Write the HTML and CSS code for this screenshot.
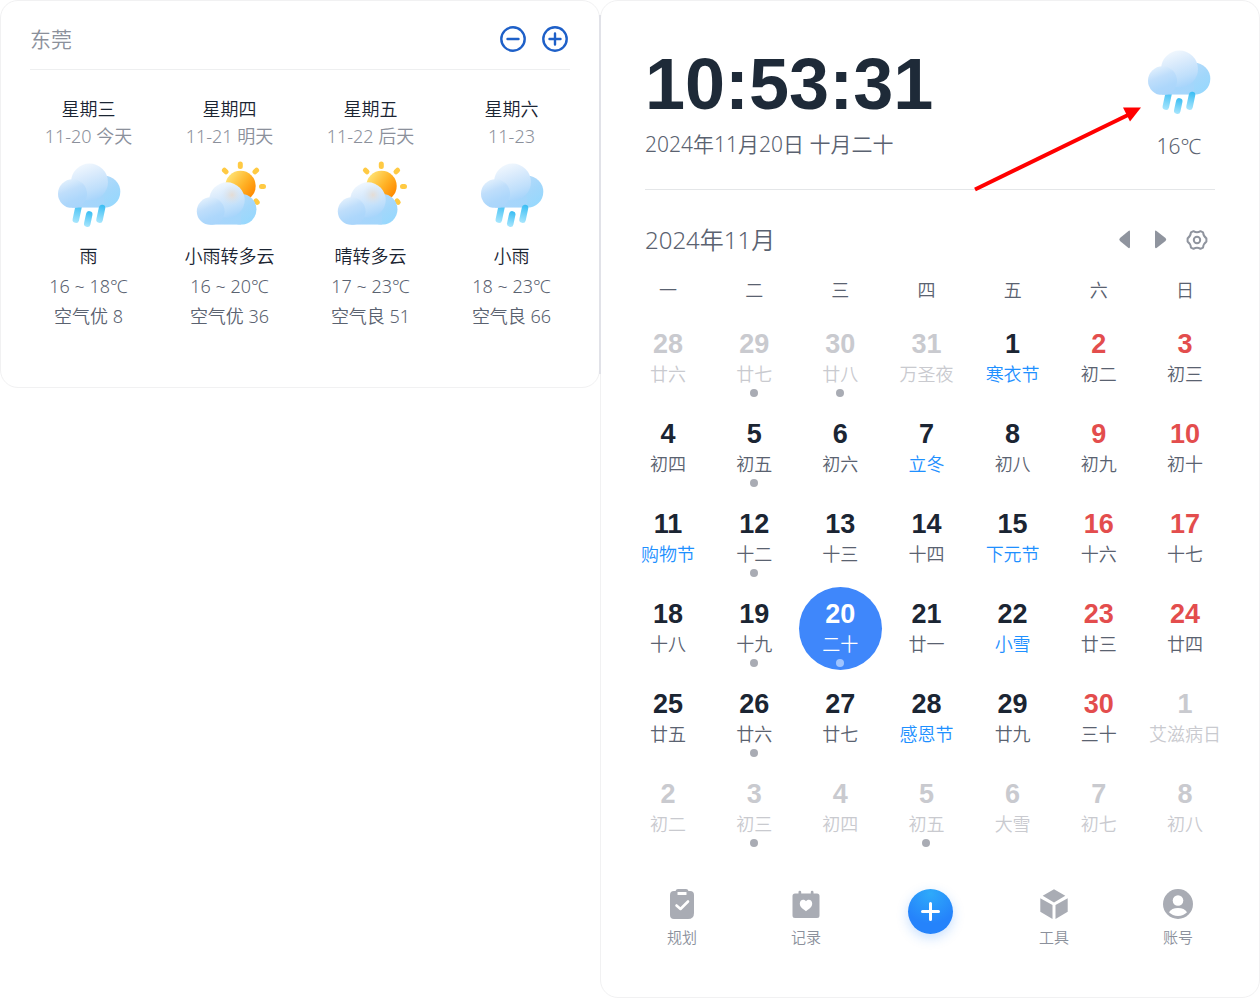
FILE: index.html
```html
<!DOCTYPE html>
<html lang="zh-CN">

<head>
	<meta charset="UTF-8">
	<meta name="viewport" content="width=device-width, initial-scale=1">
	<title>日历天气</title>
	<link rel="stylesheet" href="styles.css">
</head>

<body>
	<!-- 公用图标 -->
	<svg class="defs" width="0" height="0" aria-hidden="true">
		<defs>
			<linearGradient id="sky" x1=".3" y1="0" x2=".9" y2=".8">
				<stop offset="0" stop-color="#b9dcfa" />
				<stop offset=".6" stop-color="#a2d7fb" />
				<stop offset="1" stop-color="#98d8fd" />
			</linearGradient>
			<linearGradient id="base" x1="0" y1="0" x2="1" y2="0">
				<stop offset="0" stop-color="#a9d5fb" />
				<stop offset="1" stop-color="#a3d6fb" />
			</linearGradient>
			<linearGradient id="puff" x1=".2" y1="0" x2=".55" y2="1">
				<stop offset="0" stop-color="#f4f9fe" />
				<stop offset=".4" stop-color="#d8eafc" />
				<stop offset=".75" stop-color="#bfdffb" />
				<stop offset="1" stop-color="#a8d5fb" />
			</linearGradient>
			<linearGradient id="side" x1=".2" y1="0" x2=".6" y2="1">
				<stop offset="0" stop-color="#e6f2fd" />
				<stop offset=".4" stop-color="#bfdefb" />
				<stop offset=".75" stop-color="#add7fb" />
				<stop offset="1" stop-color="#a9d5fb" />
			</linearGradient>
			<linearGradient id="drop" x1="0" y1="0" x2="0" y2="1">
				<stop offset="0" stop-color="#38bdf3" />
				<stop offset="1" stop-color="#a9e6fd" />
			</linearGradient>
			<linearGradient id="sun" x1=".1" y1=".2" x2=".9" y2=".8">
				<stop offset="0" stop-color="#ffe070" />
				<stop offset=".5" stop-color="#ffb72c" />
				<stop offset="1" stop-color="#ff8a00" />
			</linearGradient>
			<radialGradient id="glow">
				<stop offset="0" stop-color="#ead9c9" stop-opacity=".8" />
				<stop offset="1" stop-color="#d5e4f3" stop-opacity="0" />
			</radialGradient>
			<filter id="soft" x="-10%" y="-10%" width="120%" height="120%">
				<feGaussianBlur stdDeviation=".7" />
			</filter>
			<clipPath id="cut">
				<path d="M0 0h72v48.700H0z" />
			</clipPath>
		</defs>
		<symbol id="cloud" viewBox="0 0 72 72">
			<g clip-path="url(#cut)">
				<circle cx="51.300" cy="32.700" r="16" fill="url(#sky)" />
				<path d="M19 36h32v12.700H19z" fill="url(#base)" />
				<circle cx="36.500" cy="23" r="18.500" fill="url(#puff)" filter="url(#soft)" />
				<circle cx="19.500" cy="34.700" r="14.500" fill="url(#side)" filter="url(#soft)" />
			</g>
		</symbol>
		<symbol id="rain" viewBox="0 0 72 72">
			<g fill="url(#drop)">
				<rect x="21" y="44" width="6.500" height="20" rx="3.200" transform="rotate(12 24 54)" />
				<rect x="32" y="52" width="6.500" height="16" rx="3.200" transform="rotate(12 35 60)" />
			</g>
			<use href="#cloud" width="72" height="72" />
			<rect x="44.500" y="45.500" width="6.500" height="18.500" rx="3.200" fill="url(#drop)" transform="rotate(12 47.500 55)" />
		</symbol>
		<symbol id="cloudy" viewBox="0 0 72 72">
			<g stroke="#ffca43" stroke-width="5" stroke-linecap="round">
				<path d="M46.300 5v2.500M30.400 11.200l1.600 1.600M62.600 11.200L61 12.800M67.500 27.600h2M62 42l1.200 1.400" />
			</g>
			<circle cx="46.500" cy="27" r="15.200" fill="url(#sun)" />
			<use href="#cloud" x="-2" y="19" width="69" height="69" />
			<circle cx="38" cy="36" r="11" fill="url(#glow)" />
		</symbol>
	</svg>

	<div class="layout">
		<section class="panel weather">
			<header class="city">
				<h2>东莞</h2>
				<div class="city-btns">
					<button type="button" aria-label="删除城市">
						<svg width="26" height="26" viewBox="0 0 26 26"><circle cx="13" cy="13" r="11.700" /><path d="M7.500 13h11" /></svg>
					</button>
					<button type="button" aria-label="添加城市">
						<svg width="26" height="26" viewBox="0 0 26 26"><circle cx="13" cy="13" r="11.700" /><path d="M7.500 13h11M13 7.500v11" /></svg>
					</button>
				</div>
			</header>
			<ul class="forecast">
				<li>
					<strong>星期三</strong>
					<time>11-20 今天</time>
					<svg class="sky"><use href="#rain" /></svg>
					<b>雨</b>
					<span>16 ~ 18℃</span>
					<span>空气优 8</span>
				</li>
				<li>
					<strong>星期四</strong>
					<time>11-21 明天</time>
					<svg class="sky"><use href="#cloudy" /></svg>
					<b>小雨转多云</b>
					<span>16 ~ 20℃</span>
					<span>空气优 36</span>
				</li>
				<li>
					<strong>星期五</strong>
					<time>11-22 后天</time>
					<svg class="sky"><use href="#cloudy" /></svg>
					<b>晴转多云</b>
					<span>17 ~ 23℃</span>
					<span>空气良 51</span>
				</li>
				<li>
					<strong>星期六</strong>
					<time>11-23</time>
					<svg class="sky"><use href="#rain" /></svg>
					<b>小雨</b>
					<span>18 ~ 23℃</span>
					<span>空气良 66</span>
				</li>
			</ul>
		</section>

		<section class="panel calendar">
			<header class="now">
				<div>
					<div class="clock">10:53:31</div>
					<div class="today">2024年11月20日 十月二十</div>
				</div>
				<div class="now-weather">
					<svg class="sky"><use href="#rain" /></svg>
					<span>16℃</span>
				</div>
			</header>
			<svg class="arrow" width="170" height="86" viewBox="0 0 170 86">
				<path d="M2 83.500L155 9" stroke="#f00" stroke-width="4" />
				<path d="M168 1.500h-18l7 14z" fill="#f00" />
			</svg>

			<div class="month">
				<h1>2024年11月</h1>
				<div class="month-btns">
					<button type="button" aria-label="上个月">
						<svg width="24" height="24" viewBox="0 0 24 24"><path d="M17 3.500v15.500q0 1.500-1.500 1L7 13q-1.500-1.500 0-3L15.500 3q1.500-1 1.500.500z" /></svg>
					</button>
					<button type="button" aria-label="下个月">
						<svg width="24" height="24" viewBox="0 0 24 24"><path d="M6 3.500v15.500q0 1.500 1.500 1L16.500 13q1.500-1.500 0-3L7.500 3q-1.500-1-1.500.500z" /></svg>
					</button>
					<button type="button" class="setting" aria-label="设置">
						<svg width="24" height="24" viewBox="0 0 24 24">
							<path d="M8.500 3.200Q12 5.400 15.500 3.200L18 4.400Q18.600 8.600 21.400 10.400V13.600Q18.600 15.400 18 19.600L15.500 20.800Q12 18.600 8.500 20.800L6 19.600Q5.400 15.400 2.600 13.600V10.400Q5.400 8.600 6 4.400Z" />
							<circle cx="12" cy="12" r="3.200" />
						</svg>
					</button>
				</div>
			</div>

			<div class="days">
				<table>
					<thead>
						<tr><th>一</th><th>二</th><th>三</th><th>四</th><th>五</th><th>六</th><th>日</th></tr>
					</thead>
					<tbody>
						<tr>
							<td class="other"><div class="day"><b>28</b><span>廿六</span></div></td>
							<td class="other"><div class="day dot"><b>29</b><span>廿七</span></div></td>
							<td class="other"><div class="day dot"><b>30</b><span>廿八</span></div></td>
							<td class="other"><div class="day"><b>31</b><span>万圣夜</span></div></td>
							<td class="fest"><div class="day"><b>1</b><span>寒衣节</span></div></td>
							<td class="rest"><div class="day"><b>2</b><span>初二</span></div></td>
							<td class="rest"><div class="day"><b>3</b><span>初三</span></div></td>
						</tr>
						<tr>
							<td><div class="day"><b>4</b><span>初四</span></div></td>
							<td><div class="day dot"><b>5</b><span>初五</span></div></td>
							<td><div class="day"><b>6</b><span>初六</span></div></td>
							<td class="fest"><div class="day"><b>7</b><span>立冬</span></div></td>
							<td><div class="day"><b>8</b><span>初八</span></div></td>
							<td class="rest"><div class="day"><b>9</b><span>初九</span></div></td>
							<td class="rest"><div class="day"><b>10</b><span>初十</span></div></td>
						</tr>
						<tr>
							<td class="fest"><div class="day"><b>11</b><span>购物节</span></div></td>
							<td><div class="day dot"><b>12</b><span>十二</span></div></td>
							<td><div class="day"><b>13</b><span>十三</span></div></td>
							<td><div class="day"><b>14</b><span>十四</span></div></td>
							<td class="fest"><div class="day"><b>15</b><span>下元节</span></div></td>
							<td class="rest"><div class="day"><b>16</b><span>十六</span></div></td>
							<td class="rest"><div class="day"><b>17</b><span>十七</span></div></td>
						</tr>
						<tr>
							<td><div class="day"><b>18</b><span>十八</span></div></td>
							<td><div class="day dot"><b>19</b><span>十九</span></div></td>
							<td class="check"><div class="day dot"><b>20</b><span>二十</span></div></td>
							<td><div class="day"><b>21</b><span>廿一</span></div></td>
							<td class="fest"><div class="day"><b>22</b><span>小雪</span></div></td>
							<td class="rest"><div class="day"><b>23</b><span>廿三</span></div></td>
							<td class="rest"><div class="day"><b>24</b><span>廿四</span></div></td>
						</tr>
						<tr>
							<td><div class="day"><b>25</b><span>廿五</span></div></td>
							<td><div class="day dot"><b>26</b><span>廿六</span></div></td>
							<td><div class="day"><b>27</b><span>廿七</span></div></td>
							<td class="fest"><div class="day"><b>28</b><span>感恩节</span></div></td>
							<td><div class="day"><b>29</b><span>廿九</span></div></td>
							<td class="rest"><div class="day"><b>30</b><span>三十</span></div></td>
							<td class="other"><div class="day"><b>1</b><span>艾滋病日</span></div></td>
						</tr>
						<tr>
							<td class="other"><div class="day"><b>2</b><span>初二</span></div></td>
							<td class="other"><div class="day dot"><b>3</b><span>初三</span></div></td>
							<td class="other"><div class="day"><b>4</b><span>初四</span></div></td>
							<td class="other"><div class="day dot"><b>5</b><span>初五</span></div></td>
							<td class="other"><div class="day"><b>6</b><span>大雪</span></div></td>
							<td class="other"><div class="day"><b>7</b><span>初七</span></div></td>
							<td class="other"><div class="day"><b>8</b><span>初八</span></div></td>
						</tr>
					</tbody>
				</table>
			</div>

			<nav class="tabs">
				<a href="#plan">
					<svg width="30" height="30" viewBox="0 0 30 30">
						<path d="M7 2h1.500Q9 0 11 0h8q2 0 2.500 2H23q4 0 4 4v18q0 6-6 6H7q-4 0-4-4V6q0-4 4-4z" />
						<rect x="10.500" y="3" width="9" height="3" rx=".500" fill="#fff" />
						<path class="line" d="M9.500 16.500l4 3.500L21 12.500" />
					</svg>
					<span>规划</span>
				</a>
				<a href="#record">
					<svg width="30" height="30" viewBox="0 0 30 30">
						<path d="M4 4.500h3.500V3q0-1.300 1.300-1.300T10.200 3v1.500h9.600V3q0-1.300 1.300-1.300T22.500 3v1.500H26q2.500 0 2.500 2.500v19.500Q28.500 29 26 29H4q-2.500 0-2.500-2.500V7Q1.500 4.500 4 4.500z" />
						<path d="M15 12.300C12.500 9.300 8.800 11 8.800 14.500c0 4 4 6 6.200 7.700 2.200-1.700 6.200-3.700 6.200-7.700 0-3.500-3.700-5.200-6.200-2.200z" fill="#fff" />
					</svg>
					<span>记录</span>
				</a>
				<button type="button" class="add" aria-label="新建">
					<svg width="45" height="45" viewBox="0 0 45 45"><path d="M22.500 14.500v16M14.500 22.500h16" /></svg>
				</button>
				<a href="#tools">
					<svg width="30" height="30" viewBox="0 0 30 30">
						<path d="M15 .200L26.300 6.800 15 13.400 3.700 6.800zM1.300 9.200l12.200 6.900V30L1.300 22.800zM28.700 9.200L16.500 16.100V30l12.200-7.200z" />
					</svg>
					<span>工具</span>
				</a>
				<a href="#account">
					<svg width="30" height="30" viewBox="0 0 30 30">
						<circle cx="15" cy="15" r="15" />
						<circle cx="15" cy="11.500" r="5.300" fill="#fff" />
						<path d="M6 23.300q2.500-4.300 9-4.300t9 4.300q-3.500 3.700-9 3.700t-9-3.700z" fill="#fff" />
					</svg>
					<span>账号</span>
				</a>
			</nav>
		</section>
	</div>
</body>

</html>
```
FILE: styles.css
```css
* {
	box-sizing: border-box;
	margin: 0;
	padding: 0;
}

body {
	background: #fff;
	color: #5a6270;
	font-family: 'Noto Sans', 'Noto Sans CJK SC', sans-serif;
	font-size: 18px;
	font-weight: 350;
}

h1,
h2,
th,
strong,
b {
	font-weight: 350;
}

button {
	border: 0;
	background: none;
	cursor: pointer;
}

svg {
	display: block;
}

.defs {
	position: absolute;
}

.layout {
	display: grid;
	grid-template-columns: 10fr 11fr;
	align-items: start;
	min-height: 100vh;
}

.panel {
	position: relative;
	border: 1px solid #f1f1f2;
	border-radius: 18px;
	background: #fff;
}

.sky {
	width: 72px;
	height: 72px;
}

/* 左侧天气 */
.weather {
	padding: 0 17px 56px;
}

/* 两个面板之间的分隔条 */
.weather::after {
	content: '';
	position: absolute;
	z-index: 1;
	top: 14px;
	right: -2px;
	bottom: 13px;
	width: 2px;
	background: #e1e2e8;
}

.city {
	display: flex;
	align-items: center;
	justify-content: space-between;
	height: 69px;
	margin: 0 12px;
	padding-top: 8px;
	border-bottom: 1px solid #eeeff0;
}

.city h2 {
	color: #8b909b;
	font-size: 21px;
	line-height: 30px;
}

.city-btns {
	display: flex;
	gap: 12px;
}

.city-btns button {
	display: grid;
	place-items: center;
	width: 30px;
	height: 30px;
}

.city-btns svg {
	fill: none;
	stroke: #1e60c8;
	stroke-width: 2.4;
	stroke-linecap: round;
}

.forecast {
	display: grid;
	grid-template-columns: repeat(4, 1fr);
	padding-top: 26px;
	list-style: none;
}

.forecast li {
	display: flex;
	flex-direction: column;
	align-items: center;
	line-height: 30px;
	white-space: nowrap;
}

.forecast strong,
.forecast time {
	line-height: 27px;
}

.forecast strong,
.forecast b {
	color: #1b2533;
}

.forecast time {
	color: #8b909b;
}

.forecast .sky {
	margin: 9px 0 10px;
}

/* 右侧日历 */
.calendar {
	min-height: 100vh;
	padding: 41px 44px 0;
}

.now {
	display: flex;
	justify-content: space-between;
	padding-bottom: 25px;
	border-bottom: 1px solid #e4e6e8;
	font-size: 21px;
	line-height: 36px;
}

.clock {
	color: #1e2a38;
	font: bold 72px/84px 'Liberation Sans', Arial, sans-serif;
}

.now-weather {
	display: flex;
	flex-direction: column;
	align-items: center;
	gap: 10px;
	padding-top: 4px;
}

.arrow {
	position: absolute;
	top: 105px;
	right: 116px;
}

.month {
	display: flex;
	align-items: center;
	justify-content: space-between;
	height: 48px;
	margin-top: 26px;
}

.month h1 {
	font-size: 24px;
	line-height: 36px;
}

.month-btns {
	display: flex;
}

.month-btns button {
	display: grid;
	place-items: center;
	width: 36px;
	height: 36px;
}

.month-btns svg {
	fill: #8f949e;
}

.month-btns .setting svg {
	fill: none;
	stroke: #8f949e;
	stroke-width: 2;
	stroke-linejoin: round;
}

.days {
	margin: 0 -13px 0 -20px;
}

.days table {
	width: 100%;
	table-layout: fixed;
	border-collapse: collapse;
}

.days th {
	height: 49px;
}

.days td {
	height: 90px;
}

.day {
	display: flex;
	flex-direction: column;
	align-items: center;
	width: 83px;
	height: 83px;
	margin: 0 auto;
	padding-top: 12px;
	border-radius: 50%;
	line-height: 30px;
	white-space: nowrap;
}

.day b {
	color: #1b2533;
	font: bold 27px/30px 'Liberation Sans', Arial, sans-serif;
}

.dot::after {
	content: '';
	width: 8px;
	height: 8px;
	border-radius: 50%;
	background: #a9acb4;
}

.fest span {
	color: #1e90ff;
}

.rest b {
	color: #e34d4d;
}

.other b,
.other span {
	color: #c9cacf;
}

.check .day {
	background: #3f87fb;
}

.check b,
.check span {
	color: #fff;
}

.check .dot::after {
	background: #9fc4ff;
}

/* 底部导航 */
.tabs {
	display: grid;
	grid-template-columns: repeat(5, 1fr);
	justify-items: center;
	align-items: start;
	margin: 36px -25px 0;
}

.tabs a {
	display: flex;
	flex-direction: column;
	align-items: center;
	gap: 8px;
	color: #8b909b;
	font-size: 15px;
	line-height: 20px;
	text-decoration: none;
}

.tabs a svg {
	fill: #a9acb4;
}

.tabs .line {
	fill: none;
	stroke: #fff;
	stroke-width: 2.6;
	stroke-linecap: round;
	stroke-linejoin: round;
}

.add {
	width: 45px;
	height: 45px;
	border-radius: 50%;
	background: radial-gradient(circle at 50% 10%, #2eaafa, #2583fb 65%);
	box-shadow: 0 4px 12px rgba(37, 131, 251, .25);
}

.add svg {
	stroke: #fff;
	stroke-width: 3;
	stroke-linecap: round;
}
```
